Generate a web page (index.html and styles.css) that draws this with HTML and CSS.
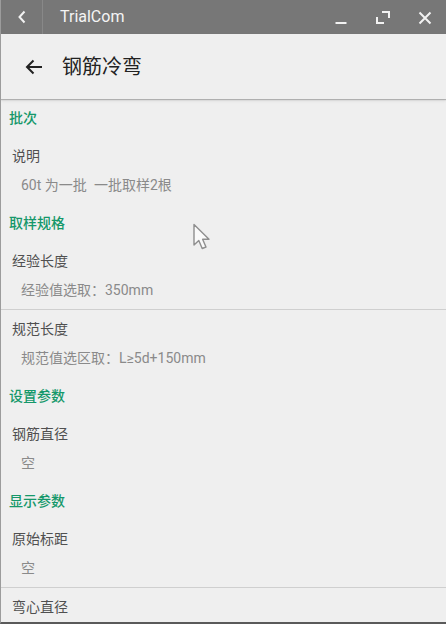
FILE: index.html
```html
<!DOCTYPE html>
<html lang="zh-CN">
<head>
<meta charset="utf-8">
<title>钢筋冷弯</title>
<link rel="stylesheet" href="styles.css">
</head>
<body>
<div class="window">
  <header class="titlebar">
    <button class="tb-back" aria-label="back">
      <svg width="10" height="14" viewBox="0 0 10 14"><path d="M7.5 1.5 L2.5 7 L7.5 12.5" fill="none" stroke="#f2f2f2" stroke-width="2"/></svg>
    </button>
    <span class="tb-title">TrialCom</span>
    <div class="tb-controls">
      <span class="tb-btn"><svg width="14" height="14" viewBox="0 0 14 14"><path d="M1.5 12 H12.5" stroke="#f2f2f2" stroke-width="2"/></svg></span>
      <span class="tb-btn"><svg width="14" height="14" viewBox="0 0 14 14"><path d="M6 1 H13 V7 M1 6 V12 H8" fill="none" stroke="#f2f2f2" stroke-width="2"/></svg></span>
      <span class="tb-btn"><svg width="14" height="14" viewBox="0 0 14 14"><path d="M1.5 1.5 L12.5 12.5 M12.5 1.5 L1.5 12.5" stroke="#f2f2f2" stroke-width="2"/></svg></span>
    </div>
  </header>

  <div class="appbar">
    <svg class="ab-back" width="18" height="16" viewBox="0 0 18 16"><path d="M17 8 H2 M8.5 1.5 L2 8 L8.5 14.5" fill="none" stroke="#222" stroke-width="2"/></svg>
    <h1 class="ab-title">钢筋冷弯</h1>
  </div>

  <main class="list">
    <div class="group">批次</div>
    <div class="item">
      <div class="item-title">说明</div>
      <div class="item-value">60t 为一批&ensp;一批取样2根</div>
    </div>

    <div class="group">取样规格</div>
    <div class="item divided">
      <div class="item-title">经验长度</div>
      <div class="item-value">经验值选取：350mm</div>
    </div>
    <div class="item">
      <div class="item-title">规范长度</div>
      <div class="item-value">规范值选区取：L≥5d+150mm</div>
    </div>

    <div class="group">设置参数</div>
    <div class="item">
      <div class="item-title">钢筋直径</div>
      <div class="item-value">空</div>
    </div>

    <div class="group">显示参数</div>
    <div class="item divided">
      <div class="item-title">原始标距</div>
      <div class="item-value">空</div>
    </div>
    <div class="item">
      <div class="item-title">弯心直径</div>
      <div class="item-value">空</div>
    </div>
  </main>

  <svg class="pointer" width="20" height="28" viewBox="0 0 20 28"><path d="M2 1.5 V22 L6.8 17.5 L10.2 25.5 L14 24 L10.6 16.3 H17 Z" fill="#fafafa" stroke="#8f8f8f" stroke-width="1.4" stroke-linejoin="round"/></svg>
</div>
</body>
</html>
```

FILE: styles.css
```css
* { box-sizing: border-box; }

html, body {
  margin: 0;
  padding: 0;
  width: 446px;
  height: 624px;
  overflow: hidden;
  background: #efefef;
}

.window {
  position: relative;
  width: 446px;
  height: 624px;
  display: flex;
  flex-direction: column;
  background: #efefef;
  font-family: Roboto, "Noto Sans CJK SC", sans-serif;
  border-left: 1px solid #9c9c9c;
  border-bottom: 2px solid #5a5a5a;
  overflow: hidden;
}

/* window title bar */
.titlebar {
  height: 34px;
  flex: none;
  display: flex;
  align-items: center;
  background: #777777;
  color: #f4f4f4;
}

.tb-back {
  width: 42px;
  height: 34px;
  border: 0;
  border-right: 1px solid #888;
  background: transparent;
  padding: 0;
  display: flex;
  align-items: center;
  justify-content: center;
}

.tb-title {
  margin-left: 17px;
  font-size: 16px;
  line-height: 20px;
}

.tb-controls {
  margin-left: auto;
  display: flex;
  align-items: center;
  gap: 28px;
  padding-right: 14px;
}

.tb-btn {
  width: 14px;
  height: 14px;
  display: flex;
  margin-top: 2px;
}

/* app bar */
.appbar {
  height: 65px;
  flex: none;
  display: flex;
  align-items: center;
  background: #efefef;
  box-shadow: 0 1px 1px rgba(0, 0, 0, 0.22), 0 2px 3px rgba(0, 0, 0, 0.08);
  position: relative;
  z-index: 1;
}

.ab-back {
  margin-left: 24px;
}

.ab-title {
  margin: 0 0 0 19px;
  font-size: 20px;
  font-weight: normal;
  line-height: 26px;
  color: #222;
}

/* settings list */
.list {
  flex: 1;
  display: flex;
  flex-direction: column;
}

.group {
  height: 38px;
  padding: 9px 0 0 8px;
  font-size: 14px;
  font-weight: 500;
  line-height: 20px;
  color: #15986a;
}

.item {
  height: 67px;
  padding: 9px 0 0 11px;
  font-size: 14px;
  line-height: 20px;
}

.item.divided {
  height: 68px;
  border-bottom: 1px solid #cfcfcf;
}

.item-title {
  color: #505050;
}

.item-value {
  margin-top: 9px;
  padding-left: 9px;
  color: #8a8a8a;
}

/* mouse pointer overlay */
.pointer {
  position: absolute;
  left: 191px;
  top: 223px;
}
```
